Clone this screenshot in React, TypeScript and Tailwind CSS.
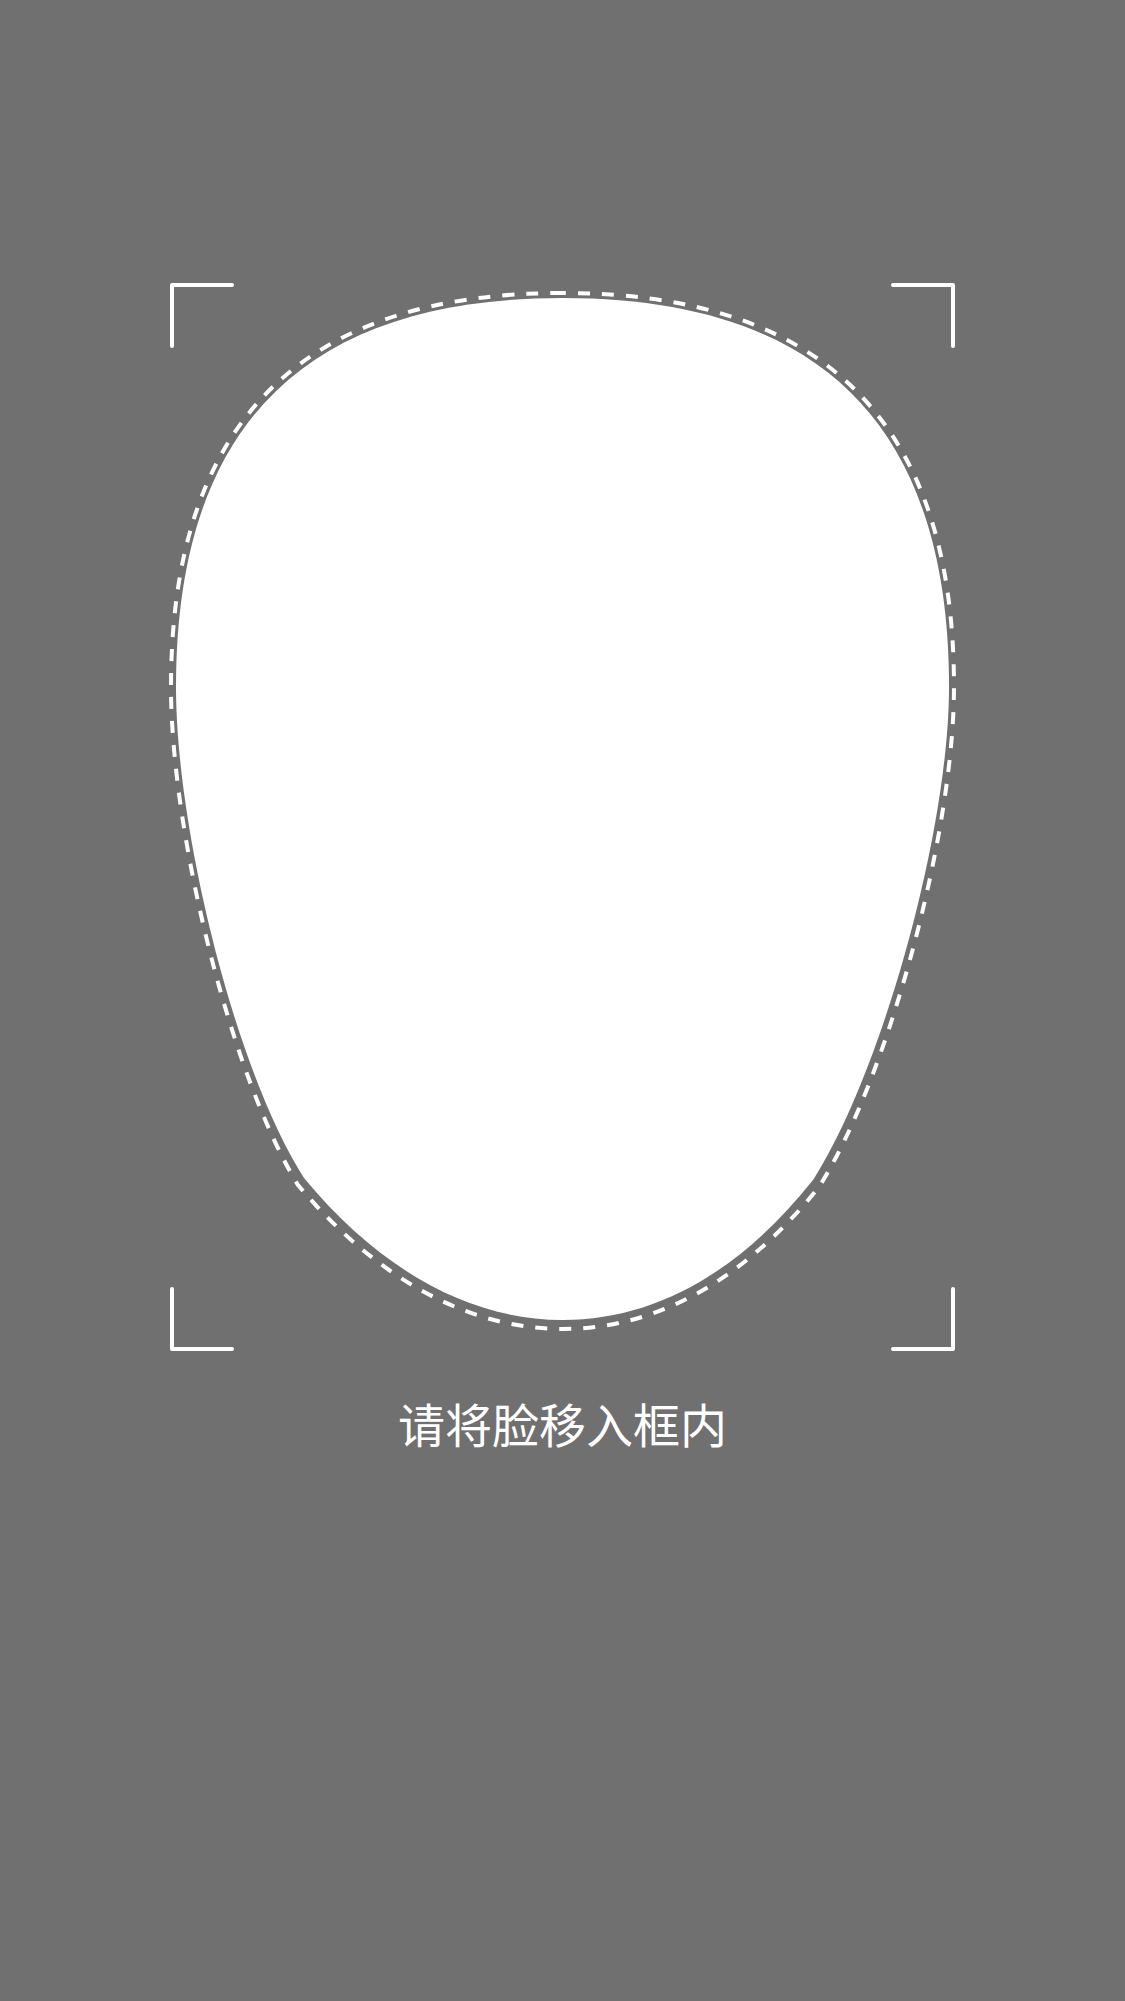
import React from "react";

const FaceFrame: React.FC = () => {
  return (
    <svg
      width={789}
      height={1072}
      viewBox="168 281 789 1072"
      fill="none"
      className="block"
    >
      {/* face area */}
      <path
        d="M562.5 298 C310 298 176 420 176 687 C176 830 235 1070 304 1178 C380 1270 470 1320 562.5 1320 C655 1320 740 1272 813 1180 C882 1072 949 830 949 687 C949 420 815 298 562.5 298 Z"
        fill="#ffffff"
      />
      {/* dashed outline */}
      <path
        d="M562.5 293 C307 293 171 417 171 687 C171 833 231 1076 298 1185 C376 1278 468 1329 562.5 1329 C657 1329 744 1280 819 1187 C888 1078 954 833 954 687 C954 417 818 293 562.5 293 Z"
        stroke="#ffffff"
        strokeWidth={4}
        strokeDasharray="12 12"
      />
      {/* corner brackets */}
      <g stroke="#ffffff" strokeWidth={4} strokeLinecap="round" strokeLinejoin="round">
        <path d="M172 346 V285 H232" />
        <path d="M893 285 H953 V346" />
        <path d="M172 1289 V1349 H232" />
        <path d="M893 1349 H953 V1289" />
      </g>
    </svg>
  );
};

export default function App() {
  return (
    <div className="w-full h-[2001px] bg-[#707070] flex flex-col items-center pt-[281px]">
      <FaceFrame />
      <p className="mt-[46px] text-white text-[47px] leading-[47px] font-['Noto_Sans_CJK_SC','Noto_Sans',sans-serif]">
        请将脸移入框内
      </p>
    </div>
  );
}
